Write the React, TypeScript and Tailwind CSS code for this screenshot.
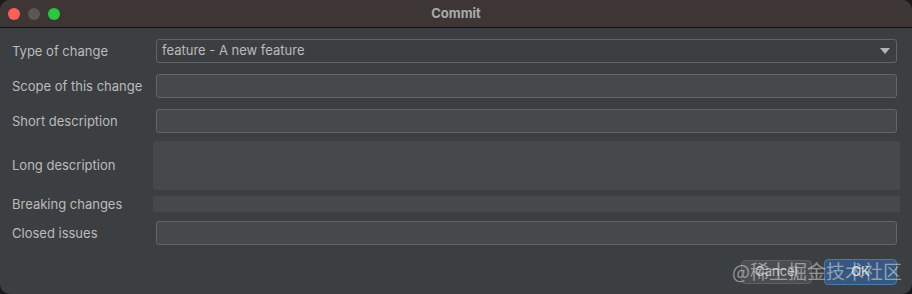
import React from 'react';

const Row = ({ label, h, children }: { label: string; h: string; children: React.ReactNode }) => (
  <div className={`flex items-center ${h}`}>
    <span className="w-[144px] shrink-0 text-[13px] leading-none text-[#bbbbbb]">{label}</span>
    {children}
  </div>
);

const Input = () => (
  <div className="h-[24px] flex-1 rounded-[3px] border border-[#646565] bg-[#45494a]" />
);

export default function App() {
  return (
    <div className="h-[294px] w-[912px] bg-[#1b1b1b]" style={{ fontFamily: 'Inter, "Noto Sans", sans-serif' }}>
      <div className="relative flex h-full flex-col overflow-hidden rounded-[10px] bg-[#3c3f41]">
        {/* title bar */}
        <div className="relative flex h-[28px] shrink-0 items-center justify-center border-b border-[#111111] bg-[#3e3535]">
          <div className="absolute left-[8px] top-[8px] flex gap-[8px]">
            <span className="h-[12px] w-[12px] rounded-full bg-[#fe5f57]" />
            <span className="h-[12px] w-[12px] rounded-full bg-[#5d5657]" />
            <span className="h-[12px] w-[12px] rounded-full bg-[#28c840]" />
          </div>
          <span className="text-[13px] font-bold text-[#aaaaaa]">Commit</span>
        </div>

        <div className="flex flex-col pl-[12px] pr-[15px] pt-[11px]">
          <Row label="Type of change" h="h-[24px]">
            <div className="flex h-[24px] flex-1 items-center justify-between rounded-[3px] border border-[#626465] bg-[#3c3f41] pl-[5px] pr-[6px]">
              <span className="text-[13px] text-[#bbbbbb]">feature - A new feature</span>
              <svg width="10" height="6" viewBox="0 0 10 6">
                <path d="M0 0h10L5 6z" fill="#b5b5b5" />
              </svg>
            </div>
          </Row>
          <div className="h-[11px]" />
          <Row label="Scope of this change" h="h-[24px]">
            <Input />
          </Row>
          <div className="h-[11px]" />
          <Row label="Short description" h="h-[24px]">
            <Input />
          </Row>
          <div className="h-[8px]" />
          <Row label="Long description" h="h-[49px]">
            <div className="-ml-[3px] -mr-[3px] h-[49px] flex-1 rounded-[3px] bg-[#45494a]" />
          </Row>
          <div className="h-[6px]" />
          <Row label="Breaking changes" h="h-[16px]">
            <div className="-ml-[3px] -mr-[3px] h-[16px] flex-1 bg-[#45494a]" />
          </Row>
          <div className="h-[9px]" />
          <Row label="Closed issues" h="h-[24px]">
            <Input />
          </Row>
          <div className="mt-[14px] flex items-center justify-end gap-[12px]">
            <button className="h-[24px] w-[71px] rounded-[4px] border border-[#5e6060] bg-[#4b4e50] text-[13px] text-[#bbbbbb]">
              Cancel
            </button>
            <button className="h-[26px] w-[73px] rounded-[4px] border border-[#4c78aa] bg-[#365880] text-[13px] text-[#dddddd]">
              OK
            </button>
          </div>
        </div>

        <span
          className="pointer-events-none absolute left-[732px] top-[257px] text-[19px] text-white/45"
          style={{ fontFamily: '"Noto Sans CJK SC", sans-serif' }}
        >
          @稀土掘金技术社区
        </span>
      </div>
    </div>
  );
}
